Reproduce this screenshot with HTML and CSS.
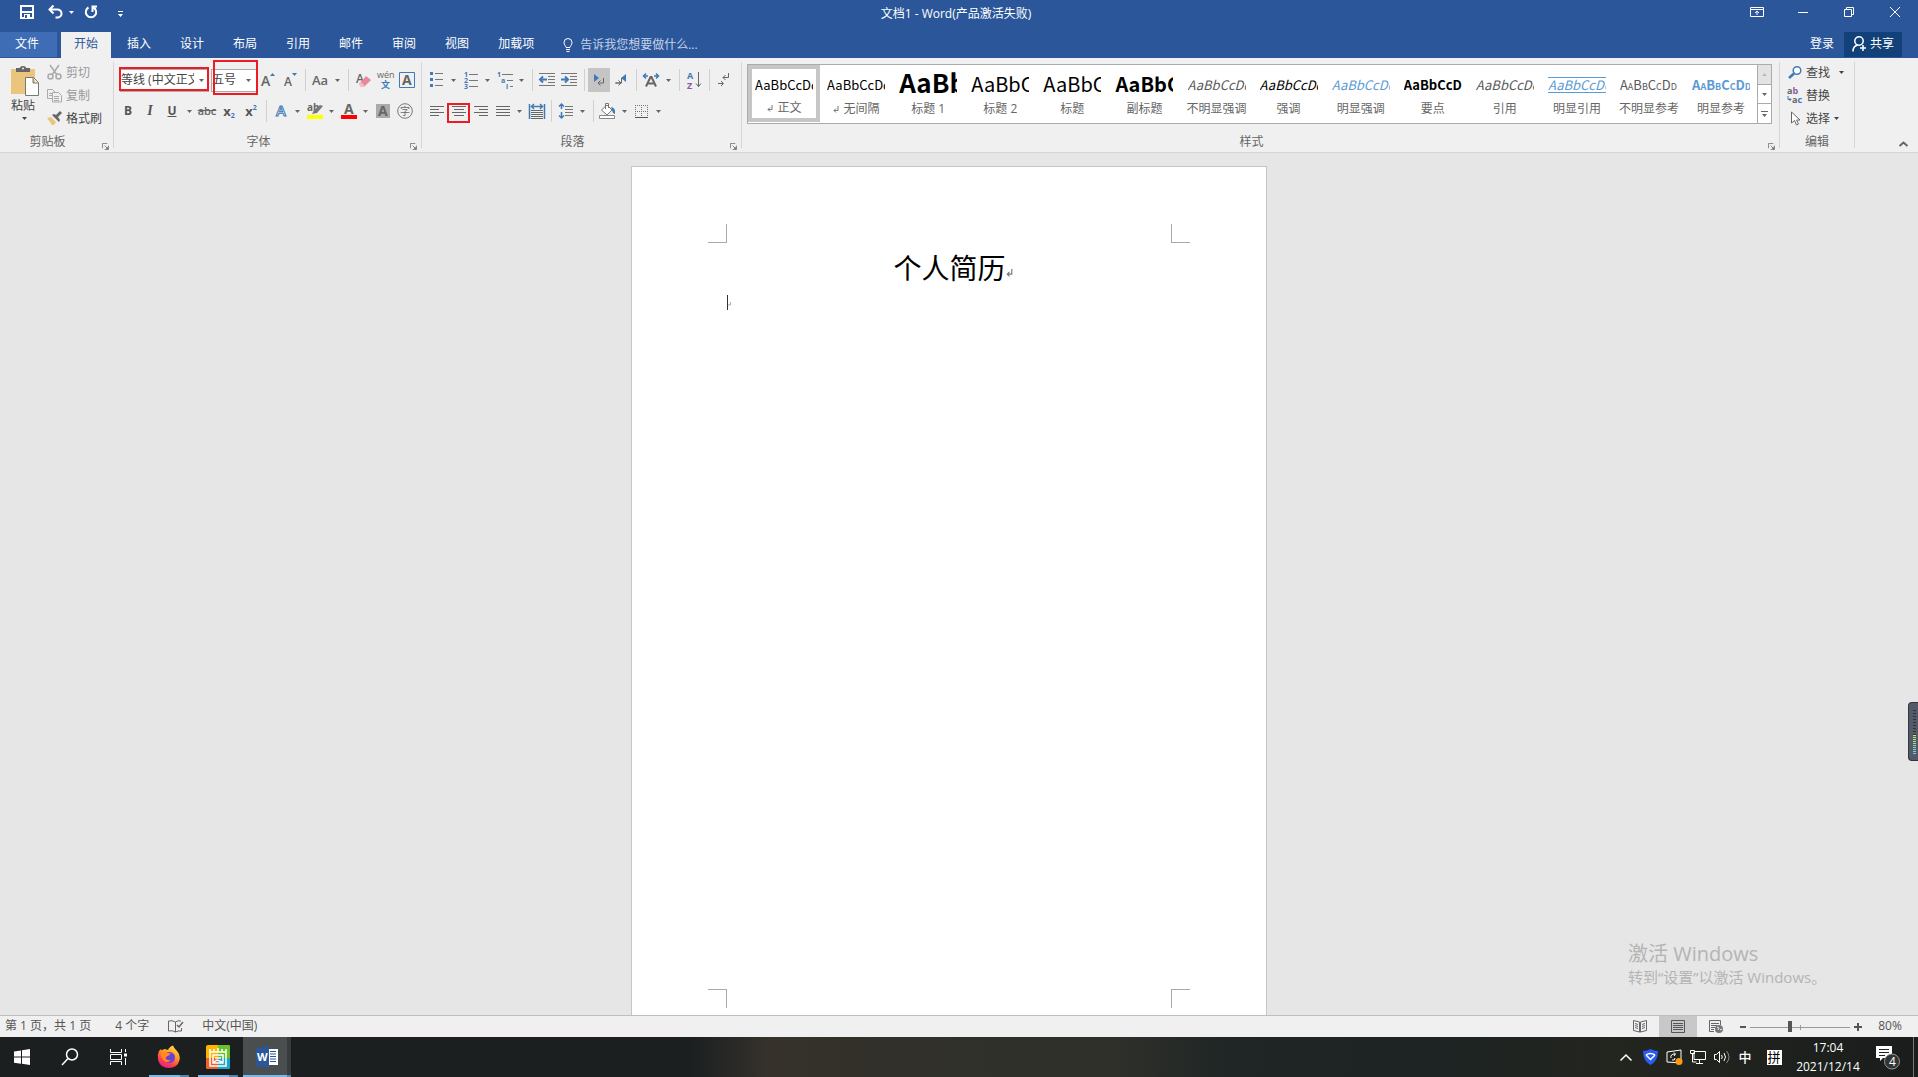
FILE: index.html
```html
<!DOCTYPE html>
<html lang="zh-CN">
<head>
<meta charset="utf-8">
<title>文档1 - Word</title>
<link rel="stylesheet" href="styles.css">
</head>
<body>
<svg class="sprite" aria-hidden="true">
  <symbol id="caret" viewBox="0 0 5 3"><path d="M0 0h5L2.500 3z" fill="currentColor"/></symbol>
  <symbol id="launch" viewBox="0 0 8 8"><path d="M.5 6V.5H6M3 3l3 3M7.500 3v4.500H3" fill="none" stroke="#777"/><path d="M4 7h3V4z" fill="#777"/></symbol>
  <symbol id="ret" viewBox="0 0 6 7"><path d="M5 0v4.500H1M3 2.500l-2 2 2 2" fill="none" stroke="#777"/></symbol>
</svg>
<div class="app">
  <header class="top">
    <div class="titlebar">
      <div class="quick">
        <button class="q-save" aria-label="保存"><svg width="14" height="14" viewBox="0 0 14 14"><path d="M1 1h12v12H1zM1 7h12" fill="none" stroke="#fff" stroke-width="2"/><path d="M4 9h6v4H4z" fill="#fff"/><path d="M5 10h2v3H5z" fill="#2b579a"/></svg></button>
        <button class="q-undo" aria-label="撤销"><svg width="15" height="14" viewBox="0 0 15 14"><path d="M1.500 4.500H9a4 4 0 0 1 1 8H7.500M5.500 .5l-4 4 4 4" fill="none" stroke="#fff" stroke-width="2"/></svg></button>
        <button class="q-car" aria-label="撤销选项"><svg width="5" height="3"><use href="#caret"/></svg></button>
        <button class="q-redo" aria-label="重复"><svg width="14" height="14" viewBox="0 0 14 14"><path d="M4.500 2.500a5.200 5.200 0 1 0 5 0M8.500 7V1.500H13" fill="none" stroke="#fff" stroke-width="2"/></svg></button>
        <button class="q-more" aria-label="自定义快速访问工具栏"><svg width="5" height="6" viewBox="0 0 5 6"><path d="M0 0h5v1H0zM0 3h5L2.500 6z" fill="#fff"/></svg></button>
      </div>
      <h1 class="doc-title">文档1 - Word(产品激活失败)</h1>
      <div class="win">
        <button aria-label="功能区显示选项"><svg width="14" height="10" viewBox="0 0 14 10"><path d="M.5 .5h13v9H.5zM1 2.500h12M7 8V4M5 6l2-2 2 2" fill="none" stroke="#fff"/></svg></button>
        <button aria-label="最小化"><svg width="10" height="10" viewBox="0 0 10 10"><path d="M0 5.500h10" stroke="#fff"/></svg></button>
        <button aria-label="还原"><svg width="10" height="10" viewBox="0 0 10 10"><path d="M.5 2.500h7v7h-7zM2.500 2V.5h7v7H8" fill="none" stroke="#fff"/></svg></button>
        <button aria-label="关闭"><svg width="10" height="10" viewBox="0 0 10 10"><path d="M0 0l10 10M10 0L0 10" stroke="#fff"/></svg></button>
      </div>
    </div>
    <nav class="tabs">
      <button class="file">文件</button>
      <button class="tab on">开始</button><button class="tab">插入</button><button class="tab">设计</button><button class="tab">布局</button><button class="tab">引用</button><button class="tab">邮件</button><button class="tab">审阅</button><button class="tab">视图</button><button class="tab">加载项</button>
      <button class="tell"><svg width="10" height="14" viewBox="0 0 10 14"><path d="M3 9.500C3 8 1 7 1 4.500a4 4 0 0 1 8 0C9 7 7 8 7 9.500zM3 11.500h4M3.500 13.500h3" fill="none" stroke="#fff"/></svg>告诉我您想要做什么...</button>
      <a class="login" href="#">登录</a>
      <button class="share"><svg width="14" height="16" viewBox="0 0 14 16"><circle cx="7" cy="5" r="4.200" fill="none" stroke="#fff" stroke-width="1.500"/><path d="M1 15.500C1 12 3 9.500 6 9M11 9v6M8 12h6" fill="none" stroke="#fff" stroke-width="1.500"/></svg>共享</button>
    </nav>
  </header>

  <section class="ribbon">
    <div class="group g-clip">
      <div class="clip">
        <button class="paste">
          <svg width="28" height="30" viewBox="0 0 28 30"><path d="M0 3h24v25H0z" fill="#ecc57d"/><path d="M5 6V2h4q0-2 3-2t3 2h4v4z" fill="#666"/><circle cx="12" cy="2.500" r="1" fill="#eee"/><path d="M14.500 11.500h8l5 5v13h-13zM22 12v5h5" fill="#fff" stroke="#777"/></svg>
          <span>粘贴</span>
          <svg width="5" height="3"><use href="#caret"/></svg>
        </button>
        <div class="clip-list">
          <button class="off"><svg width="15" height="15" viewBox="0 0 15 15" fill="none" stroke="#aaa" stroke-width="1.500"><path d="M3 0l7 10M12 0L5 10"/><circle cx="3.500" cy="11.500" r="2.500"/><circle cx="11.500" cy="11.500" r="2.500"/></svg>剪切</button>
          <button class="off"><svg width="15" height="15" viewBox="0 0 15 15" fill="#f0f0f0" stroke="#aaa"><path d="M.5 1.500h5l3 3v6h-8zM2 5.500h4M2 7.500h4"/><path d="M5.500 4.500h6l3 3v6.500h-9zM7 8.500h5M7 10.500h5M7 12.500h5"/></svg>复制</button>
          <button><svg width="15" height="15" viewBox="0 0 15 15"><path d="M0 7l4-1 5 5-2 3H5z" fill="#ecc57d"/><path d="M5 4l7 7 1-2-2-3 4-4-2-2-4 4-2-1z" fill="#666"/></svg>格式刷</button>
        </div>
      </div>
      <footer><span>剪贴板</span><button aria-label="剪贴板设置"><svg width="7" height="7"><use href="#launch"/></svg></button></footer>
    </div>

    <div class="group g-font">
      <div class="rows">
        <div class="row">
          <label class="combo c-font"><select aria-label="字体"><option>等线 (中文正文)</option></select><svg width="5" height="3"><use href="#caret"/></svg></label>
          <label class="combo c-size"><select aria-label="字号"><option>五号</option></select><svg width="5" height="3"><use href="#caret"/></svg></label>
          <button class="ic" aria-label="增大字号"><svg width="14" height="16" viewBox="0 0 14 16"><text x="0" y="14" class="t14">A</text><path d="M9 4l2.500-3L14 4z" fill="#3f7ab5"/></svg></button>
          <button class="ic" aria-label="减小字号"><svg width="14" height="16" viewBox="0 0 14 16"><text x="1" y="14" class="t12">A</text><path d="M9 1h5l-2.500 3z" fill="#3f7ab5"/></svg></button>
          <i class="sep"></i>
          <button class="ic Aa">Aa</button><button class="ca" aria-label="更改大小写"><svg width="5" height="3"><use href="#caret"/></svg></button>
          <i class="sep"></i>
          <button class="ic" aria-label="清除格式"><svg width="15" height="16" viewBox="0 0 15 16"><text x="0" y="11" class="t12">A</text><path d="M3 12l7-8 5 4-7 7H5z" fill="#e8889a"/><path d="M3 12l2-2 4 4-1 1H5z" fill="#f4bcc6"/></svg></button>
          <button class="ic" aria-label="拼音指南"><svg width="18" height="18" viewBox="0 0 18 18"><text x="1" y="7" class="t9">wén</text><text x="5" y="17" class="t9 b blue">文</text></svg></button>
          <button class="ic" aria-label="字符边框"><svg width="16" height="16" viewBox="0 0 16 16"><path d="M.5 .5h15v15H.5z" fill="none" stroke="#3f7ab5"/><text x="3" y="13" class="t14 b">A</text></svg></button>
        </div>
        <div class="row">
          <button class="ic bold">B</button><button class="ic bold ital">I</button><button class="ic bold und">U</button><button class="ca" aria-label="下划线选项"><svg width="5" height="3"><use href="#caret"/></svg></button>
          <button class="ic strike">abc</button>
          <button class="ic bold x">x<sub>2</sub></button><button class="ic bold x">x<sup>2</sup></button>
          <i class="sep"></i>
          <button class="ic n" aria-label="文本效果"><svg width="14" height="16" viewBox="0 0 14 16"><text x="2" y="13" class="fx">A</text></svg></button><button class="ca" aria-label="文本效果选项"><svg width="5" height="3"><use href="#caret"/></svg></button>
          <button class="ic n" aria-label="突出显示"><svg width="16" height="16" viewBox="0 0 16 16"><text x="0" y="8" class="t10 b">ab</text><path d="M5 11l2-4 6-5 3 1-6 7z" fill="#777"/><path d="M0 12h16v4H0z" fill="#ff0"/></svg></button><button class="ca" aria-label="突出显示颜色"><svg width="5" height="3"><use href="#caret"/></svg></button>
          <button class="ic n" aria-label="字体颜色"><svg width="16" height="16" viewBox="0 0 16 16"><text x="3" y="11" class="t14 b">A</text><path d="M0 12h16v4H0z" fill="red"/></svg></button><button class="ca" aria-label="字体颜色选项"><svg width="5" height="3"><use href="#caret"/></svg></button>
          <button class="ic" aria-label="字符底纹"><svg width="14" height="14" viewBox="0 0 14 14"><path d="M0 0h14v14H0z" fill="#aaa"/><text x="2" y="12" class="t14 b">A</text></svg></button>
          <button class="ic" aria-label="带圈字符"><svg width="16" height="16" viewBox="0 0 16 16"><circle cx="8" cy="8" r="7.300" fill="none" stroke="#777"/><text x="3" y="12" class="t10">字</text></svg></button>
        </div>
      </div>
      <footer><span>字体</span><button aria-label="字体设置"><svg width="7" height="7"><use href="#launch"/></svg></button></footer>
      <i class="mark m-font"></i><i class="mark m-size"></i>
    </div>

    <div class="group g-para">
      <div class="rows">
        <div class="row">
          <button class="ic n" aria-label="项目符号"><svg width="13" height="16" viewBox="0 0 13 16"><path d="M0 0h3v3H0zM0 6h3v3H0zM0 12h3v3H0z" fill="#3f7ab5"/><path d="M5 1.500h8M5 7.500h8M5 13.500h8" stroke="#777"/></svg></button><button class="ca" aria-label="项目符号库"><svg width="5" height="3"><use href="#caret"/></svg></button>
          <button class="ic n" aria-label="编号"><svg width="14" height="17" viewBox="0 0 14 17"><text x="0" y="5" class="t7">1</text><text x="0" y="11" class="t7">2</text><text x="0" y="17" class="t7">3</text><path d="M5 2.500h9M5 8.500h9M5 14.500h9" stroke="#777"/></svg></button><button class="ca" aria-label="编号库"><svg width="5" height="3"><use href="#caret"/></svg></button>
          <button class="ic n" aria-label="多级列表"><svg width="16" height="17" viewBox="0 0 16 17"><text x="0" y="5" class="t7">1</text><text x="4" y="11" class="t7">a</text><text x="9" y="17" class="t7">i</text><path d="M5 2.500h11M10 8.500h6M13 14.500h3" stroke="#777"/></svg></button><button class="ca" aria-label="多级列表库"><svg width="5" height="3"><use href="#caret"/></svg></button>
          <i class="sep"></i>
          <button class="ic" aria-label="减少缩进量"><svg width="16" height="14" viewBox="0 0 16 14"><path d="M0 .5h16M9 3.500h7M9 6.500h7M9 9.500h7M0 12.500h16" stroke="#777"/><path d="M1 6.500h7M4 3.500l-3 3 3 3" fill="none" stroke="#3f7ab5" stroke-width="2"/></svg></button>
          <button class="ic" aria-label="增加缩进量"><svg width="16" height="14" viewBox="0 0 16 14"><path d="M0 .5h16M9 3.500h7M9 6.500h7M9 9.500h7M0 12.500h16" stroke="#777"/><path d="M0 6.500h7M4 3.500l3 3-3 3" fill="none" stroke="#3f7ab5" stroke-width="2"/></svg></button>
          <i class="sep"></i>
          <button class="ic sel" aria-label="从左到右"><svg width="12" height="12" viewBox="0 0 12 12"><path d="M1 0l5 4-5 4z" fill="#3f7ab5"/><path d="M10.500 4v5H5M7.500 6.500L5 9l2.500 2.500" fill="none" stroke="#666"/></svg></button>
          <button class="ic" aria-label="从右到左"><svg width="12" height="12" viewBox="0 0 12 12"><path d="M11 0L6 4l5 4z" fill="#3f7ab5"/><path d="M6.500 4v5H1M3.500 6.500L6 9l-2.500 2.500M0 9h6" fill="none" stroke="#666"/></svg></button>
          <i class="sep"></i>
          <button class="ic" aria-label="中文版式"><svg width="16" height="14" viewBox="0 0 16 14"><path d="M3 13.500L7.500 4h1L13 13.500M5 10.500h6" fill="none" stroke="#666" stroke-width="2"/><path d="M0 3h5M3 .5L.5 3 3 5.500M11 3h5M13 .5L15.500 3 13 5.500" fill="none" stroke="#3f7ab5" stroke-width="1.500"/></svg></button><button class="ca" aria-label="中文版式选项"><svg width="5" height="3"><use href="#caret"/></svg></button>
          <i class="sep"></i>
          <button class="ic" aria-label="排序"><svg width="14" height="16" viewBox="0 0 14 16"><text x="0" y="7" class="t9 b blue">A</text><text x="0" y="17" class="t9 b violet">Z</text><path d="M11.500 0v15M9 11.500l2.500 3 2.500-3" fill="none" stroke="#666"/></svg></button>
          <i class="sep"></i>
          <button class="ic" aria-label="显示编辑标记"><svg width="12" height="14" viewBox="0 0 12 14"><path d="M10.500 0v4.500H5M7.500 2L5 4.500 7.500 7M0 10.500h5M3 8l2.500 2.500L3 13" fill="none" stroke="#666"/></svg></button>
        </div>
        <div class="row">
          <button class="ic" aria-label="左对齐"><svg width="14" height="11" viewBox="0 0 14 11"><path d="M0 .5h14M0 3.500h9M0 6.500h14M0 9.500h9" stroke="#666"/></svg></button>
          <button class="ic" aria-label="居中"><svg width="14" height="11" viewBox="0 0 14 11"><path d="M0 .5h14M2 3.500h10M0 6.500h14M2 9.500h10" stroke="#666"/></svg></button>
          <button class="ic" aria-label="右对齐"><svg width="14" height="11" viewBox="0 0 14 11"><path d="M0 .5h14M5 3.500h9M0 6.500h14M5 9.500h9" stroke="#666"/></svg></button>
          <button class="ic n" aria-label="两端对齐"><svg width="14" height="11" viewBox="0 0 14 11"><path d="M0 .5h14M0 3.500h14M0 6.500h14M0 9.500h14" stroke="#666"/></svg></button><button class="ca" aria-label="对齐选项"><svg width="5" height="3"><use href="#caret"/></svg></button>
          <button class="ic n" aria-label="分散对齐"><svg width="16" height="15" viewBox="0 0 16 15"><path d="M.5 0v15M15.500 0v15M2 2.500h12M5 0L2.500 2.500 5 5M11 0l2.500 2.500L11 5" fill="none" stroke="#3f7ab5" stroke-width="1.500"/><path d="M2 6.500h12M2 8.500h12M2 10.500h12M2 12.500h12M2 14.500h12" stroke="#666"/></svg></button>
          <i class="sep"></i>
          <button class="ic n" aria-label="行距"><svg width="14" height="16" viewBox="0 0 14 16"><path d="M2.500 1v5M0 3.500L2.500 1 5 3.500M2.500 9v6M0 12.500L2.500 15 5 12.500" fill="none" stroke="#3f7ab5" stroke-width="1.500"/><path d="M6 3.500h8M6 6.500h8M6 9.500h8M6 12.500h8" stroke="#777"/></svg></button><button class="ca" aria-label="行距选项"><svg width="5" height="3"><use href="#caret"/></svg></button>
          <i class="sep"></i>
          <button class="ic n" aria-label="底纹"><svg width="17" height="16" viewBox="0 0 17 16"><path d="M2.500 7L8 2l5 5-5 5zM6.500 6V.5h3V5" fill="#fff" stroke="#777"/><path d="M12 4q5 1 4 7l-2-1z" fill="#3f7ab5"/><path d="M.5 12.500h15v3H.5z" fill="#fff" stroke="#888"/></svg></button><button class="ca" aria-label="底纹颜色"><svg width="5" height="3"><use href="#caret"/></svg></button>
          <button class="ic n" aria-label="边框"><svg width="13" height="13" viewBox="0 0 13 13"><path d="M.5 0v12M6.500 0v12M12.500 0v12M0 .5h13M0 6.500h13" stroke="#777" stroke-dasharray="1 1"/><path d="M0 12.500h13" stroke="#555"/></svg></button><button class="ca" aria-label="边框选项"><svg width="5" height="3"><use href="#caret"/></svg></button>
        </div>
      </div>
      <footer><span>段落</span><button aria-label="段落设置"><svg width="7" height="7"><use href="#launch"/></svg></button></footer>
      <i class="mark m-center"></i>
    </div>

    <div class="group g-style">
      <div class="gallery">
        <button class="st cur"><span class="pv">AaBbCcDd</span><span class="nm"><svg width="6" height="7"><use href="#ret"/></svg>正文</span></button>
        <button class="st"><span class="pv">AaBbCcDd</span><span class="nm"><svg width="6" height="7"><use href="#ret"/></svg>无间隔</span></button>
        <button class="st"><span class="pv p-h1">AaBb</span><span class="nm">标题 1</span></button>
        <button class="st"><span class="pv p-big">AaBbC</span><span class="nm">标题 2</span></button>
        <button class="st"><span class="pv p-big">AaBbC</span><span class="nm">标题</span></button>
        <button class="st"><span class="pv p-big p-b">AaBbC</span><span class="nm">副标题</span></button>
        <button class="st"><span class="pv p-i p-gray">AaBbCcDd</span><span class="nm">不明显强调</span></button>
        <button class="st"><span class="pv p-i">AaBbCcDd</span><span class="nm">强调</span></button>
        <button class="st"><span class="pv p-i p-blue">AaBbCcDd</span><span class="nm">明显强调</span></button>
        <button class="st"><span class="pv p-b">AaBbCcDd</span><span class="nm">要点</span></button>
        <button class="st"><span class="pv p-i p-gray">AaBbCcDd</span><span class="nm">引用</span></button>
        <button class="st"><span class="pv p-i p-blue p-line">AaBbCcDd</span><span class="nm">明显引用</span></button>
        <button class="st"><span class="pv p-sc p-gray">AaBbCcDd</span><span class="nm">不明显参考</span></button>
        <button class="st"><span class="pv p-sc p-b p-blue">AaBbCcDd</span><span class="nm">明显参考</span></button>
        <div class="scroller">
          <button class="dis" aria-label="上一行"><svg width="5" height="3" viewBox="0 0 5 3"><path d="M0 3h5L2.500 0z" fill="#bbb"/></svg></button>
          <button aria-label="下一行"><svg width="5" height="3"><use href="#caret"/></svg></button>
          <button aria-label="其他样式"><svg width="7" height="6" viewBox="0 0 7 6"><path d="M0 0h7v1H0zM1 3h5L3.500 6z" fill="#666"/></svg></button>
        </div>
      </div>
      <footer><span>样式</span><button aria-label="样式设置"><svg width="7" height="7"><use href="#launch"/></svg></button></footer>
    </div>

    <div class="group g-edit">
      <div class="edit-list">
        <button><svg width="14" height="13" viewBox="0 0 14 13"><circle cx="9" cy="4.500" r="3.800" fill="#fff" stroke="#3f7ab5" stroke-width="1.500"/><path d="M6 7.500L1 12" stroke="#3f7ab5" stroke-width="2.500"/></svg><span class="wide">查找</span><svg width="5" height="3"><use href="#caret"/></svg></button>
        <button><svg width="14" height="15" viewBox="0 0 14 15"><text x="-1" y="6" class="t9 b">a<tspan class="violet">b</tspan></text><text x="4" y="15" class="t9 b">a<tspan class="blue">c</tspan></text><path d="M0 8v3.500h3M1.500 10L3 11.500 1.500 13" fill="none" stroke="#3f7ab5"/></svg><span>替换</span></button>
        <button><svg width="14" height="15" viewBox="0 0 14 15"><path d="M3.500 1v11l3-2.500 2 4.500 2-1-2-4h3.500z" fill="#fff" stroke="#666"/></svg><span>选择</span><svg width="5" height="3"><use href="#caret"/></svg></button>
      </div>
      <footer class="nolaunch"><span>编辑</span></footer>
    </div>
    <div class="tail"><button aria-label="折叠功能区"><svg width="9" height="6" viewBox="0 0 9 6"><path d="M.5 5L4.500 1.500 8.500 5" fill="none" stroke="#666" stroke-width="2"/></svg></button></div>
  </section>

  <main class="canvas">
    <article class="page">
      <div class="crops up"><i class="tl"></i><i class="tr"></i></div>
      <div class="text">
        <h2>个人简历<svg width="7" height="8" viewBox="0 0 6 7"><use href="#ret"/></svg></h2>
        <p><i class="cursor"></i><svg width="3" height="4" viewBox="0 0 3 4"><path d="M2.500 0v3H0" fill="none" stroke="#aaa"/></svg></p>
      </div>
      <div class="crops down"><i class="bl"></i><i class="br"></i></div>
    </article>
    <aside class="activate"><b>激活 Windows</b><span>转到“设置”以激活 Windows。</span></aside>
    <aside class="meter"><i class="idle"></i><i class="live"></i></aside>
  </main>

  <footer class="status">
    <span class="s-page">第 1 页，共 1 页</span><span class="s-words">4 个字</span>
    <button class="s-proof" aria-label="校对"><svg width="15" height="13" viewBox="0 0 15 13"><path d="M7.500 12V2Q4 0 .5 1v10q4-1 7 1 2-1.500 6-1V8M7.500 2Q10 0 13 1" fill="none" stroke="#666"/><path d="M9 5l2 2 4-5" fill="none" stroke="#666" stroke-width="1.500"/></svg></button>
    <span>中文(中国)</span>
    <div class="views">
      <button aria-label="阅读视图"><svg width="14" height="13" viewBox="0 0 14 13"><path d="M6.500 12V2L.5 .5v10L6.500 12l1 0 6-1.500V.5L7.500 2v10M2 3.500l3 1M2 5.500l3 1M2 7.500l3 1M12 3.500l-3 1M12 5.500l-3 1M12 7.500l-3 1" fill="none" stroke="#666"/></svg></button>
      <button class="on" aria-label="页面视图"><svg width="14" height="13" viewBox="0 0 14 13"><path d="M.5 .5h13v12H.5zM2 3.500h10M2 5.500h10M2 7.500h10M2 9.500h10" fill="none" stroke="#555"/></svg></button>
      <button aria-label="Web 版式视图"><svg width="14" height="13" viewBox="0 0 14 13"><path d="M5 11.500H.5V.5h11V5M2 3.500h8M2 5.500h6M2 7.500h4M2 9.500h3" fill="none" stroke="#666"/><circle cx="10" cy="9" r="4" fill="#777"/><path d="M8 7l2 1-1 2M11 10l2-1" stroke="#eee" fill="none"/></svg></button>
    </div>
    <button class="zb" aria-label="缩小"><svg width="6" height="8" viewBox="0 0 6 8"><path d="M0 4h6" stroke="#555" stroke-width="2"/></svg></button>
    <input class="zoom" type="range" min="0" max="100" value="40" aria-label="显示比例">
    <button class="zb" aria-label="放大"><svg width="8" height="8" viewBox="0 0 8 8"><path d="M0 4h8M4 0v8" stroke="#555" stroke-width="2"/></svg></button>
    <button class="pct">80%</button>
  </footer>

  <footer class="taskbar">
    <button class="start" aria-label="开始"><svg width="16" height="16" viewBox="0 0 16 16"><path d="M0 2.500l7-1V7.500H0zM8 1.300L16 0v7.500H8zM0 8.500h7v6.200l-7-1zM8 8.500h8V16l-8-1.200z" fill="#fff"/></svg></button>
    <button class="tb" aria-label="搜索"><svg width="18" height="18" viewBox="0 0 18 18"><circle cx="11" cy="6.500" r="5.500" fill="none" stroke="#fff" stroke-width="1.500"/><path d="M7 10.500L1 17" stroke="#fff" stroke-width="1.500"/></svg></button>
    <button class="tb" aria-label="任务视图"><svg width="17" height="16" viewBox="0 0 17 16"><path d="M.5 0v3.500h11V0M.5 16v-3.500h11V16M.5 5.500h11v5H.5zM15.500 0v3M15.500 9v7" fill="none" stroke="#fff"/><path d="M14 4.500h3v3h-3z" fill="#fff"/></svg></button>
    <div class="apps">
      <button class="tb run" aria-label="Firefox"><svg width="24" height="24" viewBox="0 0 24 24"><defs><linearGradient id="ff" x1=".8" y1="0" x2=".3" y2="1"><stop offset="0" stop-color="#ffe33c"/><stop offset=".45" stop-color="#ff9026"/><stop offset=".75" stop-color="#ff3b50"/><stop offset="1" stop-color="#e3208c"/></linearGradient></defs><path d="M2 6l2-2 .5 1.500Q6 4 8 4l3 1q1-3 5-4.500 1 3 4 5.500 3.500 4 2.500 9-2 8-10.500 8T1 15Q0 10 2 6z" fill="url(#ff)"/><circle cx="12.500" cy="12.500" r="5.500" fill="#6b3fd0"/><path d="M4 8q3-2 6 0l4 .5-3 2.500q-3 1-2 3 2 2 5 1-2 3-6 1.500Q4 14 4 8z" fill="#ff8a20"/></svg></button>
      <button class="tb run" aria-label="截图工具"><svg width="24" height="24" viewBox="0 0 24 24"><rect width="24" height="24" rx="2" fill="#ffb400"/><path d="M12 0h10q2 0 2 2v12H12z" fill="#6cc02c"/><path d="M12 13h12v9q0 2-2 2H12z" fill="#1aa6c4"/><path d="M0 13h12v11H2q-2 0-2-2z" fill="#f0602c"/><path d="M4 4v17h16V4M4 7h16M8 4v3M12 3v4M16 4v3M7 10h10v8H7zM9 13h6M8 17l3-2 5 2" fill="none" stroke="#fff" stroke-width="1.500"/></svg></button>
      <button class="tb run active" aria-label="Word"><svg width="22" height="22" viewBox="0 0 22 22"><path d="M12 3h10v16H12z" fill="#fff"/><path d="M14 5.500h6M14 8h6M14 10.500h6M14 13h6M14 15.500h6" stroke="#2b579a"/><path d="M0 2.500L13 0v22L0 19.500z" fill="#2b579a"/><text x="1" y="15" class="w">W</text></svg></button>
    </div>
    <div class="tray">
      <button aria-label="显示隐藏的图标"><svg width="12" height="7" viewBox="0 0 12 7"><path d="M.5 6.500L6 1l5.500 5.500" fill="none" stroke="#fff" stroke-width="1.500"/></svg></button>
      <button aria-label="安全中心"><svg width="15" height="16" viewBox="0 0 15 16"><path d="M7.500 0Q11 2 15 2q0 10-7.500 14Q0 12 0 2q4 0 7.500-2z" fill="#2b5bf0"/><path d="M3 6l4.500 4.500L12 6M3 6q4-3 9 0" fill="none" stroke="#fff" stroke-width="1.500"/></svg></button>
      <button aria-label="同步"><svg width="17" height="16" viewBox="0 0 17 16"><path d="M1 3l14-2v13L1 13zM5 9q-1-4 4-4M9 9q0 3-3 2M8 3.500L9.500 5 8 7" fill="none" stroke="#fff"/><circle cx="13" cy="12.500" r="3.500" fill="#ff9a0c"/></svg></button>
      <button aria-label="网络"><svg width="16" height="14" viewBox="0 0 16 14"><path d="M4 1.500h11.500v8H4zM9.500 10v3.500M6 13.500h7M.5 .5h4v3h-4zM2.500 4v8h4" fill="none" stroke="#fff"/></svg></button>
      <button aria-label="音量"><svg width="17" height="14" viewBox="0 0 17 14"><path d="M.5 4.500h2l3-3v11l-3-3h-2zM7.500 5q1.500 2 0 4M10 3q3 4 0 8" fill="none" stroke="#fff"/><path d="M12.500 1q5 6 0 12" fill="none" stroke="#888"/></svg></button>
      <button class="ime">中</button>
      <button class="pin"><span>拼</span></button>
      <button class="clock"><span>17:04</span><span>2021/12/14</span></button>
      <button class="note" aria-label="通知"><svg width="24" height="24" viewBox="0 0 24 24"><path d="M0 0h16v12H7l-3 3v-3H0z" fill="#fff"/><path d="M3 3.500h10M3 6.500h10M3 9.500h6" stroke="#222"/><circle cx="16" cy="15.500" r="7.500" fill="#333" stroke="#999"/><text x="13" y="20" class="badge">4</text></svg></button>
      <button class="desk" aria-label="显示桌面"></button>
    </div>
  </footer>
</div>
</body>
</html>
```
FILE: styles.css
```css
* { box-sizing: border-box; }
body {
  margin: 0;
  font: 12px/16px "Open Sans", "Noto Sans CJK SC", sans-serif;
  color: #444;
}
button {
  margin: 0; padding: 0; border: 0; background: none;
  font: inherit; color: inherit; white-space: nowrap;
}
button svg { flex: none; }
svg { display: block; overflow: visible; }
.sprite { position: absolute; width: 0; height: 0; }
.app { display: flex; flex-direction: column; height: 100vh; overflow: hidden; }

/* title bar and tabs */
.top { background: #2b579a; color: #fff; }
.titlebar { display: grid; grid-template-columns: 1fr auto 1fr; height: 32px; }
.quick { display: flex; align-items: center; padding: 0 0 8px 20px; }
.q-undo { margin-left: 14px; }
.q-car { margin-left: 6px; }
.q-redo { margin-left: 10px; }
.q-more { margin-left: 20px; padding-top: 4px; }
.doc-title { margin: 0; padding: 6px 6px 0 0; font-size: 12px; line-height: 16px; font-weight: 400; }
.win { display: flex; justify-content: flex-end; }
.win button { display: flex; width: 46px; height: 24px; align-items: center; justify-content: center; }
.tabs { display: flex; height: 26px; padding-right: 16px; }
.file { width: 57px; height: 25px; margin-right: 4px; padding: 0 3px 1px 0; background: #3e6db5; }
.tab { padding: 0 13px; margin-right: 3px; padding-bottom: 2px; }
.tab.on { background: #f0f0f0; color: #2b579a; }
.tell { display: flex; align-items: center; gap: 7px; margin-left: 13px; color: #c5d2e6; }
.login { margin-left: auto; padding-top: 4px; color: #fff; text-decoration: none; }
.share { display: flex; align-items: center; gap: 4px; height: 25px; margin-left: 10px; padding: 0 8px 2px; background: #124078; }

/* ribbon */
.ribbon { display: flex; padding: 4px 0; background: #f0f0f0; border-bottom: 1px solid #d5d5d5; }
.group { position: relative; display: flex; flex-direction: column; height: 86px; border-right: 1px solid #d5d5d5; }
.group footer { display: grid; grid-template-columns: 1fr 18px; height: 14px; margin-top: auto; line-height: 16px; text-align: center; color: #666; }
.group footer button { display: flex; align-items: flex-end; padding-left: 7px; }
.group footer.nolaunch { grid-template-columns: 1fr; }
.g-clip { width: 114px; }
.g-font { width: 308px; }
.g-para { width: 320px; }
.g-style { flex: 1; min-width: 0; padding: 0 7px 0 5px; }
.g-style footer { margin-left: -5px; margin-right: -7px; }
.g-edit { width: 75px; }
.tail { flex: none; width: 63px; display: flex; align-items: flex-end; justify-content: flex-end; padding: 0 10px 1px 0; }

.clip { display: flex; }
.paste { display: flex; flex-direction: column; align-items: flex-start; width: 47px; padding: 4px 0 0 11px; }
.paste span { padding-top: 2px; }
.paste svg:last-child { margin: 3px 0 0 11px; }
.clip-list button, .edit-list button { display: flex; align-items: center; height: 23px; gap: 4px; padding-bottom: 2px; }
.clip-list .off { color: #999; }
.edit-list { padding-left: 8px; }
.edit-list svg:first-child { width: 14px; }
.edit-list .wide { padding-right: 5px; }

.rows { display: flex; flex-direction: column; gap: 7px; padding: 6px 0 0 3px; }
.g-para .rows { padding-left: 4px; }
.row { display: flex; align-items: center; height: 24px; }
.ic { display: flex; flex: none; align-items: center; justify-content: center; width: 22px; height: 24px; }
.ic.n { width: 21px; }
.ic.sel { background: #c5c5c5; }
.ca { display: flex; flex: none; align-items: center; justify-content: center; width: 13px; height: 24px; color: #666; }
.sep { flex: none; width: 8px; height: 22px; background: linear-gradient(#d0d0d0, #d0d0d0) 4px 0 / 1px 100% no-repeat; }
.combo { display: flex; position: relative; flex: none; height: 23px; align-items: center; }
.combo select { width: 100%; height: 100%; margin: 0; padding: 0 14px 0 0; border: 1px solid #ababab; border-radius: 0; background: #fff; appearance: none; font: inherit; font-size: 12px; color: #444; }
.combo svg { position: absolute; right: 5px; color: #666; }
.c-font { width: 89px; margin-left: 3px; }
.c-size { width: 46px; margin-left: 2px; }
.c-size svg { right: 6px; }
.Aa { font-size: 13px; font-weight: 600; color: #666; }
.bold { font-weight: 700; font-size: 12px; color: #555; }
.ital { font-style: italic; font-family: "Liberation Serif", serif; font-size: 14px; }
.und { text-decoration: underline; }
.strike { text-decoration: line-through; font-size: 11px; font-weight: 600; color: #666; }
.x { font-size: 13px; }
.x sub, .x sup { font-size: 7px; line-height: 7px; color: #3f7ab5; }
.x sub { padding-top: 8px; }
.x sup { padding-bottom: 8px; }
text { font-family: "Open Sans", "Noto Sans CJK SC", sans-serif; fill: #666; }
.t14 { font-size: 14px; font-weight: 600; }
.t12 { font-size: 12px; font-weight: 600; }
.t10 { font-size: 10px; }
.t9 { font-size: 9px; }
.t7 { font-size: 7px; font-weight: 700; fill: #3f7ab5; }
.b { font-weight: 700; }
.blue { fill: #3f7ab5; }
.violet { fill: #8e5aa8; }
.fx { font-size: 15px; font-weight: 600; fill: #fff; stroke: #3f7ab5; stroke-width: 1px; }
.mark { position: absolute; border: 2px solid #ed1c24; }
.m-font { left: 5px; top: 5px; width: 90px; height: 24px; }
.m-size { left: 99px; top: -2px; width: 45px; height: 35px; }
.m-center { left: 25px; top: 41px; width: 23px; height: 20px; }

/* styles gallery */
.gallery { display: flex; height: 60px; margin-top: 2px; border: 1px solid #ababab; background: #fff; }
.st { display: flex; flex: 1; flex-direction: column; min-width: 0; height: 57px; padding: 0 7px; align-items: center; }
.cur { padding: 0 3px; border: 4px solid #c6c6c6; }
.pv { width: 58px; height: 28px; margin-top: 6px; overflow: hidden; text-align: left; font: 13px/28px "Noto Sans CJK SC", sans-serif; color: #000; }
.cur .pv { margin-top: 2px; }
.nm { display: flex; align-items: center; gap: 5px; line-height: 20px; color: #666; }
.p-h1 { font-size: 26px; line-height: 22px; font-weight: 700; }
.p-big { font-size: 20px; line-height: 26px; }
.p-b { font-weight: 700; }
.p-i { font-style: italic; }
.p-gray { color: #595959; }
.p-blue { color: #5b9bd5; }
.p-line { background: linear-gradient(#5b9bd5, #5b9bd5) 0 6px / 100% 1px no-repeat, linear-gradient(#5b9bd5, #5b9bd5) 0 21px / 100% 1px no-repeat; }
.p-sc { font-variant: small-caps; }
.scroller { display: flex; flex: none; flex-direction: column; width: 14px; border-left: 1px solid #ababab; color: #666; }
.scroller button { display: flex; flex: 1; align-items: center; justify-content: center; }
.scroller button + button { border-top: 1px solid #ababab; }
.scroller .dis { background: #e3e3e3; }

/* document */
.canvas { position: relative; display: flex; flex: 1; min-height: 0; justify-content: center; align-items: flex-start; padding: 13px 20px 0 0; overflow: hidden; background: #e6e6e6; }
.page { display: flex; flex: none; flex-direction: column; width: 636px; height: 900px; padding: 57px 76px; border: 1px solid #c6c6c6; background: #fff; }
.crops { display: flex; flex: none; justify-content: space-between; }
.crops i { width: 19px; height: 19px; border: 0 solid #aaa; }
.crops .tl { border-width: 0 1px 1px 0; }
.crops .tr { border-width: 0 0 1px 1px; }
.crops .bl { border-width: 1px 1px 0 0; }
.crops .br { border-width: 1px 0 0 1px; }
.text { flex: 1; padding: 3px 19px; color: #000; }
.text h2 { display: flex; justify-content: center; align-items: center; height: 42px; margin: 0; padding-left: 8px; font: 400 28px/42px "Noto Sans CJK SC", sans-serif; }
.text h2 svg { margin-top: 12px; }
.text p { display: flex; align-items: center; height: 28px; margin: 0; }
.text p svg { margin-top: 4px; }
.cursor { width: 1px; height: 15px; background: #333; }
.activate { position: absolute; left: calc(100% - 290px); bottom: 27px; display: flex; flex-direction: column; color: #b4b4b4; white-space: nowrap; }
.activate b { font-size: 20px; line-height: 24px; font-weight: 400; }
.activate span { font-size: 15px; line-height: 22px; }
.meter { position: absolute; right: 0; top: 549px; display: flex; flex-direction: column; width: 10px; height: 59px; padding: 7px 2px 6px 4px; border: 1px solid #33353f; border-right: 0; border-radius: 4px 0 0 4px; background: #555a68; }
.idle { height: 26px; background: repeating-linear-gradient(#2f323c 0 1px, #555a68 1px 3px); }
.live { height: 20px; background: repeating-linear-gradient(transparent 0 1px, #555a68 1px 2px), linear-gradient(#c6e66a, #5fd6d6); }

/* status bar */
.status { display: flex; flex: none; align-items: center; height: 22px; padding: 0 0 0 5px; border-top: 1px solid #bfbfbf; background: #f0f0f0; color: #555; }
.status > span { padding-bottom: 2px; }
.s-words { margin-left: 24px; }
.s-proof { margin: 0 19px; }
.views { display: flex; align-self: stretch; margin-left: auto; }
.views button { display: flex; width: 38px; align-items: center; justify-content: center; }
.views .on { background: #c8c8c8; }
.zb { display: flex; width: 15px; justify-content: center; }
.zoom { width: 100px; height: 16px; margin: 0; appearance: none; background: linear-gradient(#999, #999) 0 8px / 100% 1px no-repeat, linear-gradient(#999, #999) 50% 6px / 1px 5px no-repeat; }
.zoom::-webkit-slider-thumb { appearance: none; width: 4px; height: 11px; background: #555; }
.pct { width: 53px; padding: 0 3px 2px 0; }

/* taskbar */
.taskbar { display: flex; flex: none; height: 40px; background: linear-gradient(90deg, #1b1f1f 0, #1b1f20 36%, #36312b 40%, #2f302a 52%, #2f302a 58%, #1f2625 64%, #1d2423 75%, #23251f 84%, #1a1d1c 100%); color: #fff; }
.taskbar button { display: flex; align-items: center; justify-content: center; }
.start { width: 46px; }
.taskbar .start { padding-right: 2px; }
.tb { width: 48px; }
.apps { display: flex; gap: 1px; padding-left: 3px; }
.run { background: linear-gradient(90deg, #76b9ed 31px, #4f86b4 31px) 4px 38px / 40px 2px no-repeat; }
.active { background: linear-gradient(90deg, #76b9ed 44px, #4f86b4 44px) 0 38px / 48px 2px no-repeat, linear-gradient(90deg, #4a4e4e 44px, #383c3c 44px); }
.w { font-size: 11px; font-weight: 700; fill: #fff; }
.tray { display: flex; margin-left: auto; }
.tray button { width: 24px; }
.tray .ime { padding-right: 2px; font-size: 13px; font-weight: 500; }
.tray .pin { width: 32px; }
.pin span { width: 15px; height: 15px; background: #fff; color: #000; font-size: 13px; line-height: 15px; }
.tray .clock { width: 76px; flex-direction: column; line-height: 19px; }
.tray .note { width: 47px; padding: 2px 4px 0 0; }
.badge { font-size: 12px; fill: #fff; }
.tray .desk { width: 5px; border-left: 1px solid #777; }
```
